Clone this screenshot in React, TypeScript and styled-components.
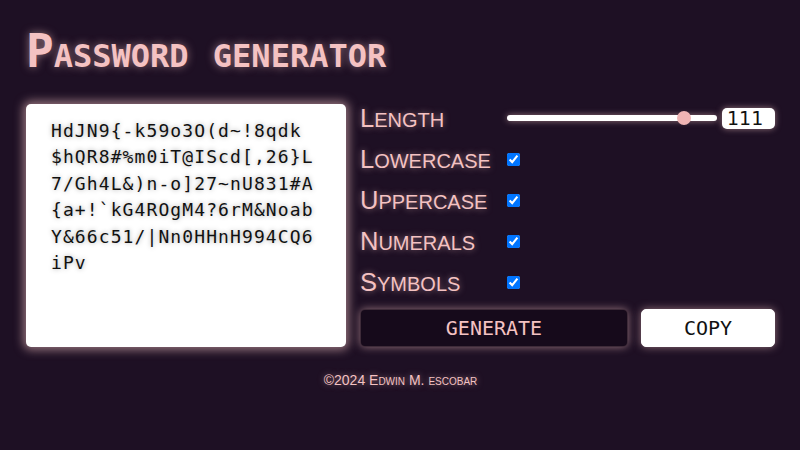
import { useState } from 'react';
import styled, { createGlobalStyle } from 'styled-components';

const pink = '#f4c2c2';
const glow = 'rgba(244, 194, 194, 0.55)';

const GlobalStyle = createGlobalStyle`
  body {
    margin: 0;
    background: #1e1024;
    font-family: 'Liberation Sans', Arial, sans-serif;
  }
`;

const Page = styled.div`
  width: 800px;
  height: 450px;
  box-sizing: border-box;
  padding: 28px 25px 0 26px;
`;

const Title = styled.h1`
  margin: 0;
  font-family: 'DejaVu Sans Mono', monospace;
  font-weight: bold;
  font-size: 32px;
  line-height: 46px;
  text-transform: uppercase;
  word-spacing: 5px;
  color: ${pink};
  text-shadow: 0 0 8px ${glow};

  &::first-letter {
    font-size: 46px;
  }
`;

const Main = styled.div`
  display: flex;
  gap: 14px;
  margin-top: 25px;
  height: 243px;
`;

const Output = styled.textarea`
  width: 320px;
  height: 243px;
  box-sizing: border-box;
  padding: 14px 27px 14px 25px;
  border: none;
  border-radius: 5px;
  outline: none;
  resize: none;
  overflow: hidden;
  background: #fff;
  color: #111;
  font-family: 'DejaVu Sans Mono', monospace;
  font-size: 18px;
  letter-spacing: 1.1px;
  line-height: 26.4px;
  word-break: break-all;
  text-shadow: 0 0 5px rgba(0, 0, 0, 0.35);
  box-shadow: 0 0 10px 3px ${glow};
`;

const Settings = styled.div`
  width: 415px;
  display: flex;
  flex-direction: column;
  gap: 13px;
`;

const Row = styled.div`
  display: flex;
  align-items: center;
  height: 28px;
`;

const Label = styled.label`
  width: 147px;
  flex-shrink: 0;
  font-size: 20px;
  text-transform: uppercase;
  color: ${pink};
  text-shadow: 0 0 6px ${glow};

  &::first-letter {
    font-size: 25.5px;
  }
`;

const Check = styled.input`
  width: 13px;
  height: 13px;
  margin: 0;
`;

const Slider = styled.input`
  -webkit-appearance: none;
  appearance: none;
  width: 210px;
  height: 14px;
  margin: 0;
  background: transparent;

  &::-webkit-slider-runnable-track {
    height: 6px;
    border-radius: 3px;
    background: #fff;
    box-shadow: 0 0 6px ${glow};
  }

  &::-webkit-slider-thumb {
    -webkit-appearance: none;
    width: 14px;
    height: 14px;
    margin-top: -4px;
    border-radius: 50%;
    background: #efb4b4;
  }
`;

const LengthBox = styled.input`
  width: 53px;
  height: 21px;
  box-sizing: border-box;
  margin-left: 5px;
  padding: 0 0 0 5px;
  border: none;
  border-radius: 5px;
  outline: none;
  background: #fff;
  color: #111;
  font-family: 'DejaVu Sans', sans-serif;
  font-size: 19px;
  box-shadow: 0 0 6px ${glow};
  -moz-appearance: textfield;

  &::-webkit-inner-spin-button,
  &::-webkit-outer-spin-button {
    -webkit-appearance: none;
    margin: 0;
  }
`;

const Buttons = styled.div`
  display: grid;
  grid-template-columns: 2fr 1fr;
  gap: 13px;
  height: 38px;
`;

const Button = styled.button<{ $light?: boolean }>`
  padding: 0;
  border: 1px solid ${(p) => (p.$light ? '#fff' : 'rgba(244, 194, 194, 0.18)')};
  border-radius: 5px;
  background: ${(p) => (p.$light ? '#fff' : '#160a1b')};
  color: ${(p) => (p.$light ? '#111' : pink)};
  font-family: 'DejaVu Sans Mono', monospace;
  font-size: 20px;
  text-transform: uppercase;
  box-shadow: 0 0 8px ${glow};
  cursor: pointer;
`;

const Footer = styled.footer`
  margin-top: 25px;
  text-align: center;
  font-size: 14px;
  font-variant: small-caps;
  color: ${pink};
  text-shadow: 0 0 6px ${glow};
`;

const options = ['Lowercase', 'Uppercase', 'Numerals', 'Symbols'];

export default function App(): JSX.Element {
  const [length, setLength] = useState(111);
  const [password] = useState(
    'HdJN9{-k59o3O(d~!8qdk $hQR8#%m0iT@IScd[,26}L7/Gh4L&)n-o]27~nU831#A{a+!`kG4ROgM4?6rM&NoabY&66c51/|Nn0HHnH994CQ6iPv'
  );

  return (
    <>
      <GlobalStyle />
      <Page>
        <Title>Password generator</Title>
        <Main>
          <Output readOnly value={password} />
          <Settings>
            <Row>
              <Label>Length</Label>
              <Slider
                type="range"
                min={1}
                max={128}
                value={length}
                onChange={(e) => setLength(Number(e.target.value))}
              />
              <LengthBox
                type="number"
                value={length}
                onChange={(e) => setLength(Number(e.target.value))}
              />
            </Row>
            {options.map((name) => (
              <Row key={name}>
                <Label>{name}</Label>
                <Check type="checkbox" defaultChecked />
              </Row>
            ))}
            <Buttons>
              <Button>Generate</Button>
              <Button $light>Copy</Button>
            </Buttons>
          </Settings>
        </Main>
        <Footer>©2024 Edwin M. escobar</Footer>
      </Page>
    </>
  );
}
